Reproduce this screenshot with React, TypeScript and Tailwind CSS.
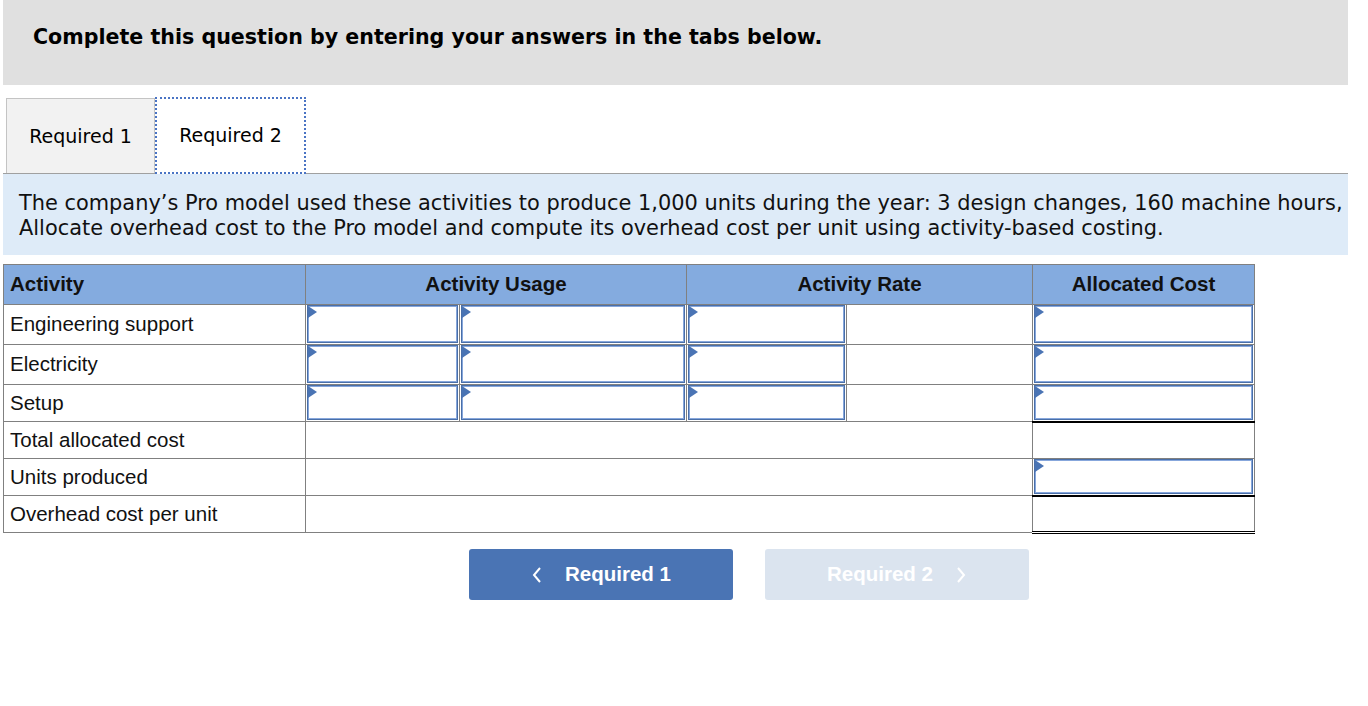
import React from "react";

const verdana = { fontFamily: '"DejaVu Sans", Verdana, sans-serif' };
const arial = { fontFamily: '"Liberation Sans", Arial, sans-serif' };

function Tri() {
  return (
    <svg className="absolute left-0 top-0" width="9" height="12" viewBox="0 0 9 12">
      <polygon points="0,0 9,6 0,12" fill="#4a74b4" />
    </svg>
  );
}

function InputBox({ h }: { h: string }) {
  return (
    <div className={`relative w-full ${h} border border-[#4a6fa8] bg-white shadow-[inset_0_0_0_1px_#87a7dc]`}>
      <Tri />
    </div>
  );
}

function Chevron({ dir }: { dir: "l" | "r" }) {
  return (
    <svg width="12" height="20" viewBox="0 0 12 20" fill="none">
      {dir === "l" ? (
        <polyline points="9,3 3,10 9,17" stroke="white" strokeWidth="2" />
      ) : (
        <polyline points="3,3 9,10 3,17" stroke="white" strokeWidth="2" />
      )}
    </svg>
  );
}

export default function App() {
  const cell = "border border-[#808080] p-0";
  const inputCell = "border border-[#808080] p-0 px-px align-top";
  const rows = ["Engineering support", "Electricity", "Setup"];
  const rowH = ["h-[40px]", "h-[40px]", "h-[37px]"];
  const boxH = ["h-[38px]", "h-[38px]", "h-[35px]"];
  return (
    <div className="w-[1368px] h-[706px] bg-white overflow-hidden">
      <div className="mx-[3px] w-[1345px] h-[85px] bg-[#e0e0e0] flex items-center pl-[30px] pb-[11px]">
        <h1 style={verdana} className="text-[20.6px] font-bold text-black">
          Complete this question by entering your answers in the tabs below.
        </h1>
      </div>

      <div className="mx-[3px] w-[1345px] mt-[12px] flex items-end border-b border-[#a0a0a0]">
        <div
          style={verdana}
          className="ml-[3px] w-[149px] h-[75px] bg-[#f2f2f2] border border-[#c4c4c4] border-b-0 flex items-center justify-center text-[19px] text-black"
        >
          Required 1
        </div>
        <div
          style={verdana}
          className="w-[151px] h-[77px] bg-white border-[2px] border-dotted border-[#4a74c4] -mb-px flex items-center justify-center text-[19px] text-black"
        >
          Required 2
        </div>
      </div>

      <div
        style={verdana}
        className="mx-[3px] w-[1345px] h-[81px] bg-[#deebf8] pl-[16px] pt-[17px] text-[20.9px] leading-[25px] text-[#111] overflow-hidden whitespace-nowrap"
      >
        <div>
          The company’s Pro model used these activities to produce 1,000 units during the year: 3 design changes, 160 machine hours,
        </div>
        <div>Allocate overhead cost to the Pro model and compute its overhead cost per unit using activity-based costing.</div>
      </div>

      <table style={arial} className="ml-[3px] mt-[9px] border-collapse table-fixed text-[20.5px] text-[#111]">
        <colgroup>
          <col className="w-[302px]" />
          <col className="w-[154px]" />
          <col className="w-[227px]" />
          <col className="w-[160px]" />
          <col className="w-[186px]" />
          <col className="w-[222px]" />
        </colgroup>
        <thead>
          <tr className="h-[40px] bg-[#84abdf]">
            <th className={`${cell} text-left pl-[6px] font-bold`}>Activity</th>
            <th colSpan={2} className={`${cell} text-center font-bold`}>Activity Usage</th>
            <th colSpan={2} className={`${cell} text-center font-bold`}>Activity Rate</th>
            <th className={`${cell} text-center font-bold`}>Allocated Cost</th>
          </tr>
        </thead>
        <tbody>
          {rows.map((r, i) => (
            <tr key={r} className={rowH[i]}>
              <td className={`${cell} pl-[6px] align-middle`}>{r}</td>
              <td className={inputCell}><InputBox h={boxH[i]} /></td>
              <td className={inputCell}><InputBox h={boxH[i]} /></td>
              <td className={inputCell}><InputBox h={boxH[i]} /></td>
              <td className={cell}></td>
              <td className={inputCell}><InputBox h={boxH[i]} /></td>
            </tr>
          ))}
          <tr className="h-[37px]">
            <td className={`${cell} pl-[6px]`}>Total allocated cost</td>
            <td colSpan={4} className={cell}></td>
            <td className={`${cell} border-t-[2px] border-t-black`}></td>
          </tr>
          <tr className="h-[37px]">
            <td className={`${cell} pl-[6px]`}>Units produced</td>
            <td colSpan={4} className={cell}></td>
            <td className={inputCell}><InputBox h="h-[35px]" /></td>
          </tr>
          <tr className="h-[37px]">
            <td className={`${cell} pl-[6px]`}>Overhead cost per unit</td>
            <td colSpan={4} className={cell}></td>
            <td className={`${cell} border-t-[2px] border-t-black border-b-[3px] border-b-black border-double`}></td>
          </tr>
        </tbody>
      </table>

      <div style={arial} className="flex gap-[32px] ml-[469px] mt-[15px]">
        <button className="w-[264px] h-[51px] rounded-[3px] bg-[#4a74b4] text-white font-bold text-[20.5px] flex items-center justify-center gap-[22px]">
          <Chevron dir="l" />
          <span>Required 1</span>
        </button>
        <button className="w-[264px] h-[51px] rounded-[3px] bg-[#dbe4ef] text-white font-bold text-[20.5px] flex items-center justify-center gap-[22px]">
          <span>Required 2</span>
          <Chevron dir="r" />
        </button>
      </div>
    </div>
  );
}
